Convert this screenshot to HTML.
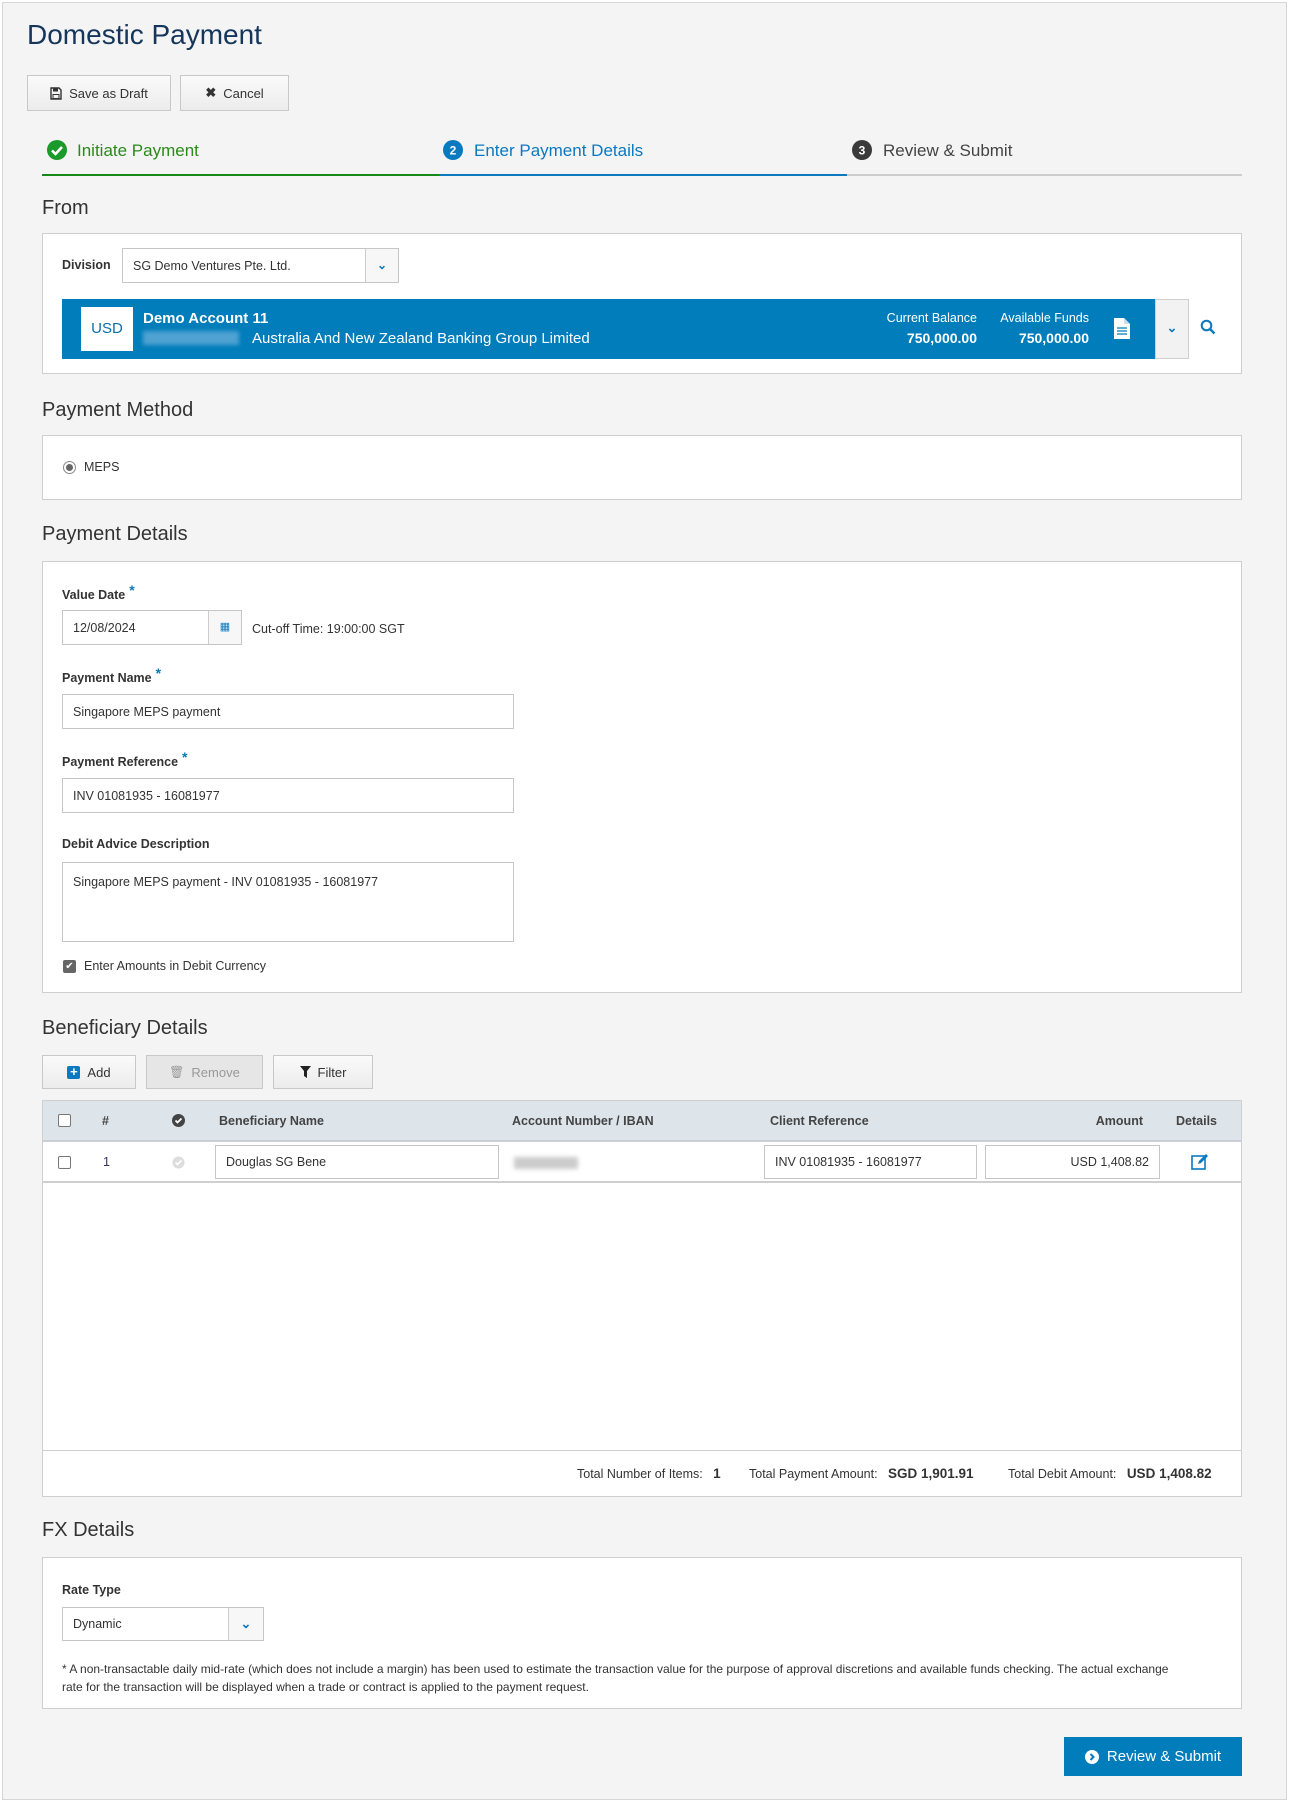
<!DOCTYPE html>
<html><head><meta charset="utf-8"><style>
*{box-sizing:border-box;margin:0;padding:0}
body{width:1295px;height:1806px;background:#fff;font-family:"Liberation Sans",sans-serif;color:#333;position:relative;overflow:hidden}
.pg{position:absolute;left:2px;top:2px;width:1285px;height:1798px;background:#f4f4f4;border:1px solid #d6d6d6}
.a{position:absolute}
.h{position:absolute;font-size:20px;color:#333;left:42px}
.panel{position:absolute;left:42px;width:1200px;background:#fff;border:1px solid #cfcfcf}
.btn{position:absolute;background:linear-gradient(#fafafa,#ececec);border:1px solid #c8c8c8;font-size:13px;color:#333;display:flex;align-items:center;justify-content:center;gap:7px}
.lbl{position:absolute;font-size:12.5px;font-weight:bold;color:#333;left:62px}
.lbl b{color:#0a79b8;font-size:14px;position:relative;top:-4px;margin-left:4px}
.inp{position:absolute;background:#fff;border:1px solid #c6c6c6;font-size:12.5px;color:#333;padding-left:10px;display:flex;align-items:center}
.t{position:absolute;font-size:12.5px;color:#333;white-space:nowrap}
.th{position:absolute;font-size:12.5px;font-weight:bold;color:#444;top:1114px}
.cb{position:absolute;width:13px;height:13px;border:1px solid #777;border-radius:2px;background:#fff}
</style></head><body>
<div class="pg"></div>
<div class="a" style="left:27px;top:19px;font-size:28px;color:#15365a">Domestic Payment</div>
<div class="btn" style="left:27px;top:75px;width:144px;height:36px"><svg width="12" height="13" viewBox="0 0 12 13"><path d="M1 1h8l2 2v9H1z" fill="none" stroke="#333" stroke-width="1.4"/><rect x="3" y="1.5" width="5" height="3" fill="#333"/><rect x="3" y="7.5" width="6" height="4" fill="none" stroke="#333"/></svg>Save as Draft</div>
<div class="btn" style="left:180px;top:75px;width:109px;height:36px"><span style="font-weight:bold">✖</span>Cancel</div>

<svg class="a" style="left:47px;top:140px" width="20" height="20"><circle cx="10" cy="10" r="10" fill="#1a9a2a"/><path d="M5 10.5l3.5 3.5 6.5-7" stroke="#fff" stroke-width="2.6" fill="none"/></svg>
<div class="a" style="left:77px;top:141px;font-size:17px;color:#2b8a1a">Initiate Payment</div>
<svg class="a" style="left:443px;top:140px" width="20" height="20"><circle cx="10" cy="10" r="10" fill="#0a79c0"/><text x="10" y="14.5" font-size="12" font-weight="bold" fill="#fff" text-anchor="middle" font-family="Liberation Sans">2</text></svg>
<div class="a" style="left:474px;top:141px;font-size:17px;color:#0a79c0">Enter Payment Details</div>
<svg class="a" style="left:852px;top:140px" width="20" height="20"><circle cx="10" cy="10" r="10" fill="#3a3a3a"/><text x="10" y="14.5" font-size="12" font-weight="bold" fill="#fff" text-anchor="middle" font-family="Liberation Sans">3</text></svg>
<div class="a" style="left:883px;top:141px;font-size:17px;color:#444">Review &amp; Submit</div>
<div class="a" style="left:42px;top:174px;width:397px;height:2px;background:#168a16"></div>
<div class="a" style="left:439px;top:174px;width:408px;height:2px;background:#0a79c0"></div>
<div class="a" style="left:847px;top:174px;width:395px;height:2px;background:#ccc"></div>

<div class="h" style="top:197px">From</div>
<div class="panel" style="top:233px;height:141px"></div>
<div class="t" style="left:62px;top:258px;font-weight:bold">Division</div>
<div class="inp" style="left:122px;top:248px;width:277px;height:35px">SG Demo Ventures Pte. Ltd.</div>
<div class="a" style="left:365px;top:249px;width:33px;height:33px;border-left:1px solid #ccc;background:#f7f7f7;color:#0a79c0;font-size:12px;text-align:center;line-height:33px;font-weight:bold">⌄</div>
<div class="a" style="left:62px;top:299px;width:1093px;height:60px;background:#007dba"></div>
<div class="a" style="left:1155px;top:299px;width:34px;height:60px;background:#f2f2f2;border:1px solid #d0d0d0;color:#0a79c0;text-align:center;line-height:56px;font-size:13px;font-weight:bold">⌄</div>
<svg class="a" style="left:1200px;top:319px" width="16" height="16"><circle cx="6.5" cy="6.5" r="4.8" stroke="#0a79c0" stroke-width="2" fill="none"/><path d="M10 10l4.5 4.5" stroke="#0a79c0" stroke-width="2.4"/></svg>
<div class="a" style="left:81px;top:307px;width:52px;height:44px;background:#fff;color:#0a6fa8;font-size:15px;text-align:center;line-height:44px">USD</div>
<div class="a" style="left:143px;top:310px;font-size:15px;font-weight:bold;color:#fff">Demo Account 11</div>
<div class="a" style="left:143px;top:331px;width:96px;height:14px;background:#4fa2d2;filter:blur(2px)"></div>
<div class="a" style="left:252px;top:330px;font-size:15px;color:#fff">Australia And New Zealand Banking Group Limited</div>
<div class="a" style="left:868px;top:311px;width:109px;text-align:right;font-size:12.5px;color:#fff">Current Balance</div>
<div class="a" style="left:868px;top:330px;width:109px;text-align:right;font-size:14px;font-weight:bold;color:#fff">750,000.00</div>
<div class="a" style="left:983px;top:311px;width:106px;text-align:right;font-size:12.5px;color:#fff">Available Funds</div>
<div class="a" style="left:983px;top:330px;width:106px;text-align:right;font-size:14px;font-weight:bold;color:#fff">750,000.00</div>
<svg class="a" style="left:1114px;top:318px" width="16" height="21"><path d="M0 0h10l6 6v15H0z" fill="#fff"/><path d="M10 0v6h6" fill="#cde" /><path d="M3 10h10M3 13h10M3 16h10" stroke="#007dba" stroke-width="1.3"/></svg>

<div class="h" style="top:399px">Payment Method</div>
<div class="panel" style="top:435px;height:65px"></div>
<div class="a" style="left:63px;top:461px;width:13px;height:13px;border-radius:50%;border:1px solid #888;background:#fff"><div style="width:7px;height:7px;border-radius:50%;background:#666;margin:2px"></div></div>
<div class="t" style="left:84px;top:460px">MEPS</div>

<div class="h" style="top:523px">Payment Details</div>
<div class="panel" style="top:561px;height:432px"></div>
<div class="lbl" style="top:586px">Value Date<b>*</b></div>
<div class="inp" style="left:62px;top:610px;width:180px;height:35px">12/08/2024</div>
<div class="a" style="left:208px;top:611px;width:33px;height:33px;border-left:1px solid #ccc;background:#f7f7f7;text-align:center;line-height:33px;font-size:11px;color:#0a79c0">▦</div>
<div class="t" style="left:252px;top:622px">Cut-off Time: 19:00:00 SGT</div>
<div class="lbl" style="top:669px">Payment Name<b>*</b></div>
<div class="inp" style="left:62px;top:694px;width:452px;height:35px">Singapore MEPS payment</div>
<div class="lbl" style="top:753px">Payment Reference<b>*</b></div>
<div class="inp" style="left:62px;top:778px;width:452px;height:35px">INV 01081935 - 16081977</div>
<div class="lbl" style="top:837px">Debit Advice Description</div>
<div class="inp" style="left:62px;top:862px;width:452px;height:80px;align-items:flex-start;padding-top:12px">Singapore MEPS payment - INV 01081935 - 16081977</div>
<div class="a" style="left:63px;top:960px;width:13px;height:13px;background:#666;border-radius:2px;color:#fff;font-size:10px;line-height:13px;text-align:center">✔</div>
<div class="t" style="left:84px;top:959px">Enter Amounts in Debit Currency</div>

<div class="h" style="top:1017px">Beneficiary Details</div>
<div class="btn" style="left:42px;top:1055px;width:94px;height:34px"><span style="width:13px;height:13px;background:#0a79c0;color:#fff;border-radius:2px;font-size:13px;line-height:12px;text-align:center;font-weight:bold">+</span>Add</div>
<div class="btn" style="left:146px;top:1055px;width:117px;height:34px;background:#e6e6e6;color:#999"><span style="font-size:12px">🗑</span>Remove</div>
<div class="btn" style="left:273px;top:1055px;width:100px;height:34px"><svg width="11" height="12"><path d="M0 0h11L7 5v7L4 10V5z" fill="#222"/></svg>Filter</div>

<div class="panel" style="top:1100px;height:397px"></div>
<div class="a" style="left:43px;top:1101px;width:1198px;height:41px;background:#dde4ea;border-bottom:2px solid #c9cfd4"></div>
<div class="cb" style="left:58px;top:1114px"></div>
<div class="th" style="left:102px">#</div>
<svg class="a" style="left:172px;top:1114px" width="13" height="13"><circle cx="6.5" cy="6.5" r="6.5" fill="#444"/><path d="M3.5 6.5l2 2 4-4" stroke="#fff" stroke-width="1.8" fill="none"/></svg>
<div class="th" style="left:219px">Beneficiary Name</div>
<div class="th" style="left:512px">Account Number / IBAN</div>
<div class="th" style="left:770px">Client Reference</div>
<div class="th" style="left:1060px;width:83px;text-align:right">Amount</div>
<div class="th" style="left:1176px">Details</div>
<div class="a" style="left:43px;top:1181px;width:1198px;height:2px;background:#cfcfcf"></div>
<div class="cb" style="left:58px;top:1156px"></div>
<div class="t" style="left:103px;top:1155px;color:#333366">1</div>
<svg class="a" style="left:172px;top:1156px" width="13" height="13"><circle cx="6.5" cy="6.5" r="6" fill="#ddd"/><path d="M3.5 6.5l2 2 4-4" stroke="#fff" stroke-width="1.6" fill="none"/></svg>
<div class="inp" style="left:215px;top:1145px;width:284px;height:34px">Douglas SG Bene</div>
<div class="a" style="left:514px;top:1157px;width:64px;height:12px;background:#ccc;filter:blur(2px)"></div>
<div class="inp" style="left:764px;top:1145px;width:213px;height:34px">INV 01081935 - 16081977</div>
<div class="inp" style="left:985px;top:1145px;width:175px;height:34px;justify-content:flex-end;padding-right:10px">USD 1,408.82</div>
<svg class="a" style="left:1191px;top:1153px" width="18" height="18"><rect x="1" y="3" width="13" height="13" fill="none" stroke="#0a79c0" stroke-width="1.6"/><path d="M7 11l1-3 7-7 2 2-7 7z" fill="#0a79c0"/></svg>
<div class="a" style="left:43px;top:1450px;width:1198px;height:1px;background:#cfcfcf"></div>
<div class="t" style="left:577px;top:1466px">Total Number of Items: &nbsp; <b style="font-size:13.5px">1</b></div>
<div class="t" style="left:749px;top:1466px">Total Payment Amount: &nbsp; <b style="font-size:13.5px">SGD 1,901.91</b></div>
<div class="t" style="left:1008px;top:1466px">Total Debit Amount: &nbsp; <b style="font-size:13.5px">USD 1,408.82</b></div>

<div class="h" style="top:1519px">FX Details</div>
<div class="panel" style="top:1557px;height:152px"></div>
<div class="lbl" style="top:1583px">Rate Type</div>
<div class="inp" style="left:62px;top:1607px;width:202px;height:34px">Dynamic</div>
<div class="a" style="left:228px;top:1608px;width:35px;height:32px;border-left:1px solid #ccc;background:#f7f7f7;color:#0a79c0;text-align:center;line-height:32px;font-size:13px;font-weight:bold">⌄</div>
<div class="a" style="left:62px;top:1660px;width:1130px;font-size:12px;line-height:18px;color:#333">* A non-transactable daily mid-rate (which does not include a margin) has been used to estimate the transaction value for the purpose of approval discretions and available funds checking. The actual exchange rate for the transaction will be displayed when a trade or contract is applied to the payment request.</div>

<div class="a" style="left:1064px;top:1737px;width:178px;height:39px;background:#007dba;color:#fff;font-size:15px;display:flex;align-items:center;justify-content:center;gap:8px"><svg width="14" height="14"><circle cx="7" cy="7" r="7" fill="#fff"/><path d="M5.5 4l3 3-3 3" stroke="#007dba" stroke-width="2" fill="none"/></svg>Review &amp; Submit</div>
</body></html>
